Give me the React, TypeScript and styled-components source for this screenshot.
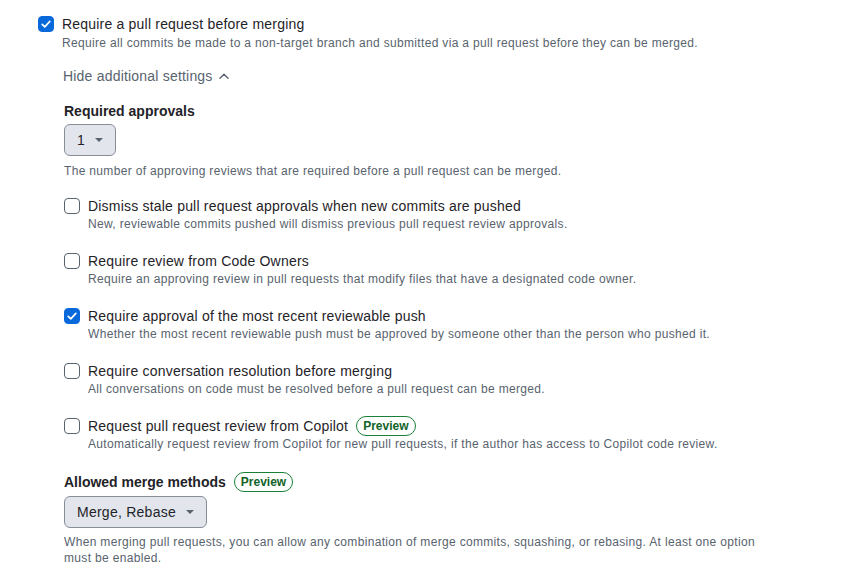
import styled, { createGlobalStyle } from "styled-components";

const GlobalStyle = createGlobalStyle`
  body {
    margin: 0;
    background: #ffffff;
    font-family: "Liberation Sans", Arial, sans-serif;
    color: #1f2328;
  }
`;

const Page = styled.div`
  padding: 14px 0 0 38px;
  width: 730px;
`;

const OptionRow = styled.div<{ $gap?: number }>`
  display: flex;
  gap: 8px;
  margin-top: ${(p) => p.$gap ?? 0}px;
`;

const Box = styled.span<{ $checked?: boolean }>`
  flex: none;
  width: 16px;
  height: 16px;
  margin-top: 2px;
  box-sizing: border-box;
  border-radius: 4px;
  border: 1px solid ${(p) => (p.$checked ? "#0969da" : "#59636e")};
  background: ${(p) => (p.$checked ? "#0969da" : "#ffffff")};
  display: flex;
  align-items: center;
  justify-content: center;
`;

const OptionText = styled.div`
  display: flex;
  flex-direction: column;
`;

const Title = styled.div`
  font-size: 14px;
  line-height: 20px;
  letter-spacing: 0.2px;
  color: #1f2328;
  display: flex;
  align-items: center;
  gap: 8px;
`;

const Note = styled.div<{ $top?: number }>`
  font-size: 12px;
  line-height: 16px;
  letter-spacing: 0.33px;
  color: #59636e;
  margin-top: ${(p) => p.$top ?? 0}px;
`;

const Settings = styled.div`
  padding-left: 1px;
`;

const Toggle = styled.div`
  margin-top: 15px;
  font-size: 14px;
  line-height: 20px;
  letter-spacing: 0.2px;
  color: #59636e;
  display: flex;
  align-items: center;
  gap: 6px;
`;

const Heading = styled.div<{ $top: number }>`
  margin-top: ${(p) => p.$top}px;
  padding-left: 1px;
  font-size: 14px;
  line-height: 20px;
  font-weight: 700;
  display: flex;
  align-items: center;
  gap: 8px;
`;

const Group = styled.div`
  padding-left: 1px;
`;

const Select = styled.button<{ $top: number }>`
  margin-top: ${(p) => p.$top}px;
  height: 32px;
  padding: 0 12px;
  display: inline-flex;
  align-items: center;
  gap: 10px;
  font-family: inherit;
  font-size: 14px;
  font-weight: 500;
  letter-spacing: 0.25px;
  color: #1f2328;
  background: #e2e6ec;
  border: 1px solid #858d97;
  border-radius: 6px;
`;

const Badge = styled.span`
  display: inline-flex;
  align-items: center;
  height: 20px;
  box-sizing: border-box;
  padding: 0 6px;
  border: 1px solid #1a7f37;
  border-radius: 999px;
  font-size: 12px;
  font-weight: 700;
  letter-spacing: 0;
  color: #116329;
`;

const Check = () => (
  <svg width="12" height="12" viewBox="0 0 12 12" fill="none">
    <path d="M2.2 6.3 4.8 8.8 9.8 3.4" stroke="#fff" strokeWidth="1.7" strokeLinecap="round" strokeLinejoin="round" />
  </svg>
);

const Caret = () => (
  <svg width="8" height="4" viewBox="0 0 8 4">
    <path d="M0 0h8L4 4z" fill="#59636e" />
  </svg>
);

const ChevronUp = () => (
  <svg width="10" height="6" viewBox="0 0 10 6" fill="none">
    <path d="M1 5.2 5 1.2l4 4" stroke="#59636e" strokeWidth="1.4" strokeLinecap="round" strokeLinejoin="round" />
  </svg>
);

type Option = { title: string; note: string; checked?: boolean; preview?: boolean };

const options: Option[] = [
  {
    title: "Dismiss stale pull request approvals when new commits are pushed",
    note: "New, reviewable commits pushed will dismiss previous pull request review approvals.",
  },
  {
    title: "Require review from Code Owners",
    note: "Require an approving review in pull requests that modify files that have a designated code owner.",
  },
  {
    title: "Require approval of the most recent reviewable push",
    note: "Whether the most recent reviewable push must be approved by someone other than the person who pushed it.",
    checked: true,
  },
  {
    title: "Require conversation resolution before merging",
    note: "All conversations on code must be resolved before a pull request can be merged.",
  },
  {
    title: "Request pull request review from Copilot",
    note: "Automatically request review from Copilot for new pull requests, if the author has access to Copilot code review.",
    preview: true,
  },
];

export default function App() {
  return (
    <>
      <GlobalStyle />
      <Page>
        <OptionRow>
          <Box $checked>
            <Check />
          </Box>
          <OptionText>
            <Title>Require a pull request before merging</Title>
            <Note $top={1}>
              Require all commits be made to a non-target branch and submitted via a pull request before they can be merged.
            </Note>
            <Settings>
              <Toggle>
                Hide additional settings <ChevronUp />
              </Toggle>
              <Heading $top={15}>Required approvals</Heading>
              <Group>
                <Select $top={3}>
                  1 <Caret />
                </Select>
                <Note $top={7}>The number of approving reviews that are required before a pull request can be merged.</Note>
                {options.map((o, i) => (
                  <OptionRow key={o.title} $gap={i === 0 ? 17 : 19}>
                    <Box $checked={o.checked}>{o.checked && <Check />}</Box>
                    <OptionText>
                      <Title>
                        {o.title}
                        {o.preview && <Badge>Preview</Badge>}
                      </Title>
                      <Note>{o.note}</Note>
                    </OptionText>
                  </OptionRow>
                ))}
              </Group>
              <Heading $top={20}>
                Allowed merge methods <Badge>Preview</Badge>
              </Heading>
              <Group>
                <Select $top={4}>
                  Merge, Rebase <Caret />
                </Select>
                <Note $top={6}>
                  When merging pull requests, you can allow any combination of merge commits, squashing, or rebasing. At least one option must be enabled.
                </Note>
              </Group>
            </Settings>
          </OptionText>
        </OptionRow>
      </Page>
    </>
  );
}
